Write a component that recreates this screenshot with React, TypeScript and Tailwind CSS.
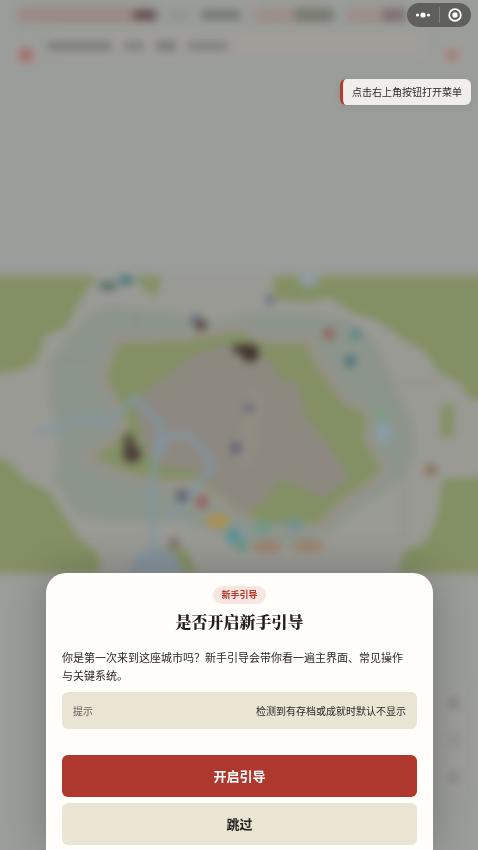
import type { ReactNode } from "react";

const sans = "font-['Noto_Sans_CJK_SC',sans-serif]";
const serif = "font-['Noto_Serif_CJK_SC','Noto_Sans_CJK_SC',serif]";

const pins = [
  { x: 108, y: 286, rx: 10, ry: 4, fill: "#4f6960" },
  { x: 126, y: 280, rx: 8, ry: 5, fill: "#4d7880" },
  { x: 195, y: 319, rx: 5, ry: 5, fill: "#62707c" },
  { x: 201, y: 325, rx: 6, ry: 6, fill: "#5a4b47" },
  { x: 240, y: 349, rx: 8, ry: 5, fill: "#4a3d35" },
  { x: 250, y: 353, rx: 9, ry: 9, fill: "#3f332d" },
  { x: 129, y: 442, rx: 5, ry: 9, fill: "#54463f" },
  { x: 132, y: 454, rx: 9, ry: 9, fill: "#4a3c37" },
  { x: 270, y: 300, rx: 5, ry: 5, fill: "#66728a" },
  { x: 329, y: 334, rx: 6, ry: 6, fill: "#94605f" },
  { x: 356, y: 334, rx: 6, ry: 6, fill: "#5f8582" },
  { x: 350, y: 361, rx: 6, ry: 6, fill: "#50707b" },
  { x: 249, y: 408, rx: 5, ry: 5, fill: "#646879" },
  { x: 236, y: 448, rx: 6, ry: 6, fill: "#625f74" },
  { x: 182, y: 496, rx: 6, ry: 6, fill: "#5f5a6c" },
  { x: 202, y: 502, rx: 6, ry: 7, fill: "#985f60" },
  { x: 174, y: 543, rx: 5, ry: 5, fill: "#796560" },
  { x: 431, y: 470, rx: 6, ry: 6, fill: "#8a6f5a" },
  { x: 218, y: 521, rx: 12, ry: 6, fill: "#b09048" },
  { x: 233, y: 536, rx: 7, ry: 8, fill: "#5a9098" },
  { x: 242, y: 546, rx: 6, ry: 5, fill: "#5b9582" },
  { x: 262, y: 526, rx: 9, ry: 5, fill: "#6b9a80" },
  { x: 294, y: 524, rx: 8, ry: 6, fill: "#6f9192" },
  { x: 267, y: 547, rx: 15, ry: 6, fill: "#9c816b" },
  { x: 308, y: 546, rx: 17, ry: 6, fill: "#9a836d" },
  { x: 383, y: 433, rx: 7, ry: 11, fill: "#899dab" },
  { x: 380, y: 415, rx: 11, ry: 5, fill: "#7f9c83" },
  { x: 309, y: 280, rx: 10, ry: 7, fill: "#8f9ba4" },
];

function CityMap() {
  return (
    <svg viewBox="0 276 478 297" className="w-full overflow-visible blur-[4px]">
      <path fill="#999a94" d="M-20 276H498V573H-20Z" />
      <path
        fill="#8c958b"
        d="M88 315L110 306L170 311L205 323L250 312L300 312L345 318L378 345L395 385L412 420L415 450L405 478L380 494L350 514L330 534L290 543L240 540L180 522L120 523L75 515L55 480L58 440L49 400L48 365L65 340Z"
      />
      <g fill="#829063">
        <path d="M-20 276H98L85 292L75 310L65 328L43 337L40 355L28 368L-20 377Z" />
        <path d="M134 276H162L156 297L145 290Z" />
        <path d="M273 276H498V403L470 399L459 382L440 374L425 352L400 337L380 322L353 313L330 297L310 302L274 300Z" />
        <path d="M441 404H454V437H441Z" />
        <path d="M442 479L498 477V573H397L405 550L425 543L438 515Z" />
        <path d="M-20 460H8L25 480L50 492L60 510L80 540L98 553L100 573H-20Z" />
        <path
          stroke="#98928b"
          strokeWidth="7"
          d="M115 340L180 338L240 328L262 340H308L320 365L345 400L370 413L367 440L386 470L365 488L340 505L322 525L280 531L240 515L195 482L160 483L125 475L86 458L112 440L125 425L114 400L103 378Z"
        />
        <path d="M158 548L185 548L197 573H155Z" />
      </g>
      <path
        fill="#8d8981"
        d="M245 345L270 360L280 378L300 386L305 415L325 440L350 478L325 498L280 478L264 502L240 515L218 492L195 470L165 467L145 452L140 430L133 400L160 380L190 357L220 345Z"
      />
      <path fill="#979186" opacity="0.5" d="M248 390L262 395L252 465L237 462Z" />
      <path fill="#85939d" d="M128 573L135 556L151 549L175 552L184 573Z" />
      <g fill="none" stroke="#8296a2" strokeWidth="5" strokeLinejoin="round">
        <path d="M34 433L58 428L80 416L108 424L122 410L135 397L162 427L155 462L151 500L154 550" />
        <path d="M160 455L165 437L187 434L207 455L212 468L195 487L180 507L166 520" />
        <path strokeWidth="3" d="M240 515V535L262 532L280 524L305 531" />
      </g>
      <path stroke="#8b8c87" strokeWidth="2" fill="none" d="M398 382H440M404 475V540M50 360L95 358M136 310V330" />
      {pins.map((p) => (
        <ellipse key={`${p.x}-${p.y}`} cx={p.x} cy={p.y} rx={p.rx} ry={p.ry} fill={p.fill} />
      ))}
    </svg>
  );
}

// Dimmed main screen that sits behind the sheet
function Backdrop() {
  return (
    <div aria-hidden="true" className="flex min-h-screen flex-col overflow-hidden">
      <div className="flex h-[30px] items-center gap-3 pr-[72px] pl-4">
        <div className="flex h-4 flex-[14] items-center justify-end rounded-full bg-[#9b8985] blur-[4px]">
          <div className="h-2 w-6 rounded bg-[#544746]" />
        </div>
        <div className="flex h-4 flex-[7] items-center justify-end gap-3 blur-[4px]">
          <div className="h-2 w-5 rounded bg-[#8f908d]" />
          <div className="h-2 w-10 rounded bg-[#6d6f6b]" />
        </div>
        <div className="flex h-4 flex-[8] items-center justify-end rounded-full bg-[#9b8f8a] blur-[4px]">
          <div className="h-3 w-10 rounded bg-[#757a6f]" />
        </div>
        <div className="flex h-4 flex-[6] items-center justify-end rounded-full bg-[#9c8e8a] blur-[4px]">
          <div className="h-3 w-6 rounded bg-[#7c716f]" />
        </div>
      </div>
      <div className="flex h-[50px] items-center gap-2 px-3">
        <div className="flex size-7 items-center justify-center rounded-full bg-[#9f9f9b] blur-[4px]">
          <div className="size-4 rounded-full bg-[#a0716d]" />
        </div>
        <div className="flex h-7 flex-1 gap-3 self-start rounded-lg bg-[#9f9e99] pt-3 blur-[4px]">
          <div className="h-2 w-16 bg-[#777875]" />
          <div className="h-2 w-5 bg-[#7d7e7a]" />
          <div className="h-2 w-5 bg-[#737471]" />
          <div className="h-2 w-10 bg-[#7d7e7a]" />
        </div>
        <div className="flex size-7 items-center justify-center rounded-full bg-[#9f9f9b] blur-[4px]">
          <div className="h-3 w-4 rounded-full bg-[#a17f7b]" />
        </div>
      </div>
      <div className="pt-[196px]">
        <CityMap />
      </div>
      <div className="mt-28 mr-2 flex h-[110px] w-8 flex-col items-center justify-around self-end rounded-lg bg-[#9d9d99] blur-[4px]">
        <div className="size-3 rounded-full bg-[#868680]" />
        <div className="size-3 rounded-full bg-[#918f8a]" />
        <div className="size-3 rounded-full bg-[#8a8984]" />
      </div>
    </div>
  );
}

function Capsule() {
  return (
    <div className="flex h-6 w-16 items-center rounded-full bg-[#5f605d] text-white">
      <button type="button" aria-label="更多" className="flex flex-1 items-center justify-center">
        <svg viewBox="0 0 16 8" className="h-2 w-4" fill="currentColor">
          <circle cx="2.5" cy="4" r="1.6" />
          <circle cx="8" cy="4" r="2.6" />
          <circle cx="13.5" cy="4" r="1.6" />
        </svg>
      </button>
      <div className="h-4 w-px bg-[#7d7e7b]" />
      <button type="button" aria-label="关闭" className="flex flex-1 items-center justify-center">
        <svg viewBox="0 0 14 14" className="size-[14px]">
          <circle cx="7" cy="7" r="5.8" fill="none" stroke="currentColor" strokeWidth="1.8" />
          <circle cx="7" cy="7" r="2.7" fill="currentColor" />
        </svg>
      </button>
    </div>
  );
}

function SheetButton({ primary, children }: { primary?: boolean; children: ReactNode }) {
  return (
    <button
      type="button"
      className={`h-[42px] w-full rounded-md text-[13px] font-bold ${
        primary ? "bg-[#ae382d] text-white" : "bg-[#eae4d3] text-[#24211f]"
      }`}
    >
      {children}
    </button>
  );
}

export default function App() {
  return (
    <div className={`relative min-h-screen overflow-hidden bg-[#9a9d99] text-[#2b2826] ${sans}`}>
      <Backdrop />

      <div className="fixed inset-0 flex flex-col justify-between">
        <div className="flex flex-col items-end pt-[3px] pr-[7px]">
          <Capsule />
          <p className="mt-[52px] rounded-md border-l-[3px] border-[#b83a2e] bg-[#efeeeb] px-[9px] text-[10px] leading-[26px] shadow-[0_2px_8px_rgba(0,0,0,0.06)]">
            点击右上角按钮打开菜单
          </p>
        </div>

        <div className="pr-[45px] pl-[46px]">
          <section
            role="dialog"
            aria-labelledby="guide-title"
            className="flex flex-col rounded-t-[20px] bg-[#fffefa] px-4 pt-[13px] pb-[5px] shadow-[0_0_40px_rgba(0,0,0,0.24)]"
          >
            <span className="self-center rounded-full bg-[#f6e5e1] px-2 text-[9px] leading-[18px] font-bold text-[#b5382d]">
              新手引导
            </span>
            <h1 id="guide-title" className={`mt-[6px] text-center text-base leading-6 font-black text-[#211e1c] ${serif}`}>
              是否开启新手引导
            </h1>
            <p className="mt-[14px] pr-1 text-[11px] leading-[18px]">
              你是第一次来到这座城市吗？新手引导会带你看一遍主界面、常见操作与关键系统。
            </p>
            <div className="mt-2 flex h-[37px] items-center justify-between rounded-md bg-[#eae4d3] px-[11px] text-[10px]">
              <span className="text-[#66605a]">提示</span>
              <span>检测到有存档或成就时默认不显示</span>
            </div>
            <div className="mt-[26px] flex flex-col gap-[6px]">
              <SheetButton primary>开启引导</SheetButton>
              <SheetButton>跳过</SheetButton>
            </div>
          </section>
        </div>
      </div>
    </div>
  );
}
